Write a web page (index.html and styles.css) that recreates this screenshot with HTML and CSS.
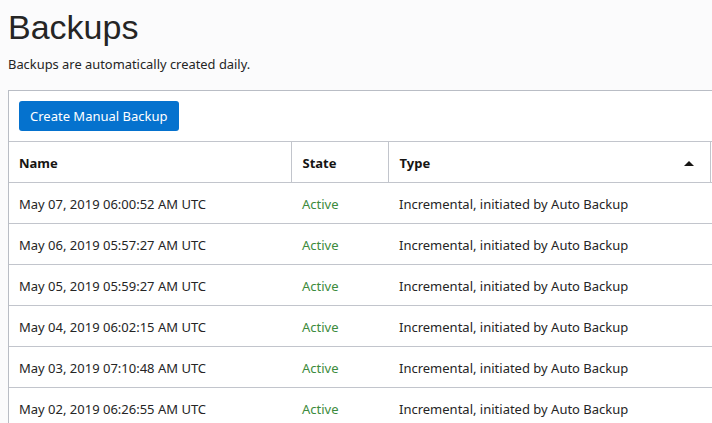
FILE: index.html
```html
<!DOCTYPE html>
<html>
<head>
<meta charset="utf-8">
<link rel="stylesheet" href="styles.css">
</head>
<body>
<h1 class="title">Backups</h1>
<p class="subtitle">Backups are automatically created daily.</p>
<div class="panel">
  <div class="toolbar">
    <button class="btn-primary">Create Manual Backup</button>
  </div>
  <table class="grid">
    <colgroup>
      <col class="c-name"><col class="c-state"><col class="c-type"><col class="c-extra">
    </colgroup>
    <thead>
      <tr>
        <th>Name</th>
        <th>State</th>
        <th class="sorted"><span>Type</span><span class="sort-arrow"></span></th>
        <th class="last"></th>
      </tr>
    </thead>
    <tbody>
      <tr><td>May 07, 2019 06:00:52 AM UTC</td><td class="active">Active</td><td>Incremental, initiated by Auto Backup</td><td></td></tr>
      <tr><td>May 06, 2019 05:57:27 AM UTC</td><td class="active">Active</td><td>Incremental, initiated by Auto Backup</td><td></td></tr>
      <tr><td>May 05, 2019 05:59:27 AM UTC</td><td class="active">Active</td><td>Incremental, initiated by Auto Backup</td><td></td></tr>
      <tr><td>May 04, 2019 06:02:15 AM UTC</td><td class="active">Active</td><td>Incremental, initiated by Auto Backup</td><td></td></tr>
      <tr><td>May 03, 2019 07:10:48 AM UTC</td><td class="active">Active</td><td>Incremental, initiated by Auto Backup</td><td></td></tr>
      <tr><td>May 02, 2019 06:26:55 AM UTC</td><td class="active">Active</td><td>Incremental, initiated by Auto Backup</td><td></td></tr>
    </tbody>
  </table>
</div>
</body>
</html>
```
FILE: styles.css
```css
html, body {
  margin: 0;
  padding: 0;
  background: #fbfbfc;
  overflow: hidden;
}
body {
  padding: 0 0 0 8px;
  font-family: "Noto Sans", "Open Sans", sans-serif;
  color: #252525;
}
.title {
  margin: 0;
  padding-top: 8px;
  font-family: "Liberation Sans", Arial, sans-serif;
  font-weight: normal;
  font-size: 34px;
  line-height: 38px;
  color: #252525;
}
.subtitle {
  margin: 10px 0 0 0;
  font-size: 12.9px;
  line-height: 17px;
}
.panel {
  margin-top: 17px;
  width: 703px;
  overflow: hidden;
  background: #fff;
  border-top: 1px solid #b9bdc5;
  border-left: 1px solid #b9bdc5;
}
.toolbar {
  padding: 10px;
}
.btn-primary {
  display: block;
  height: 30px;
  padding: 0 11px;
  border: none;
  border-radius: 3px;
  background: #0572ce;
  color: #fff;
  font-family: "Noto Sans", "Open Sans", sans-serif;
  font-size: 13px;
}
.grid {
  width: 703px;
  border-collapse: collapse;
  table-layout: fixed;
  font-size: 13px;
}
.c-name { width: 282px; }
.c-state { width: 97px; }
.c-type { width: 322px; }
.grid th, .grid td {
  text-align: left;
  padding: 2px 0 0 11px;
  height: 38px;
  border-bottom: 1px solid #c2c5cc;
  white-space: nowrap;
}
.grid th:first-child, .grid td:first-child {
  padding-left: 10px;
}
.grid th {
  font-weight: bold;
  border-top: 1px solid #c2c5cc;
  border-right: 1px solid #c2c5cc;
  color: #161513;
}
.grid th.last {
  padding-left: 0;
  border-right: none;
}
.grid td:last-child {
  padding-left: 0;
}
.grid th.sorted {
  position: relative;
}
.sort-arrow {
  position: absolute;
  right: 16px;
  top: 19px;
  width: 0;
  height: 0;
  border-left: 5px solid transparent;
  border-right: 5px solid transparent;
  border-bottom: 5px solid #161513;
}
.grid td.active {
  color: #3d8b3d;
}
```
